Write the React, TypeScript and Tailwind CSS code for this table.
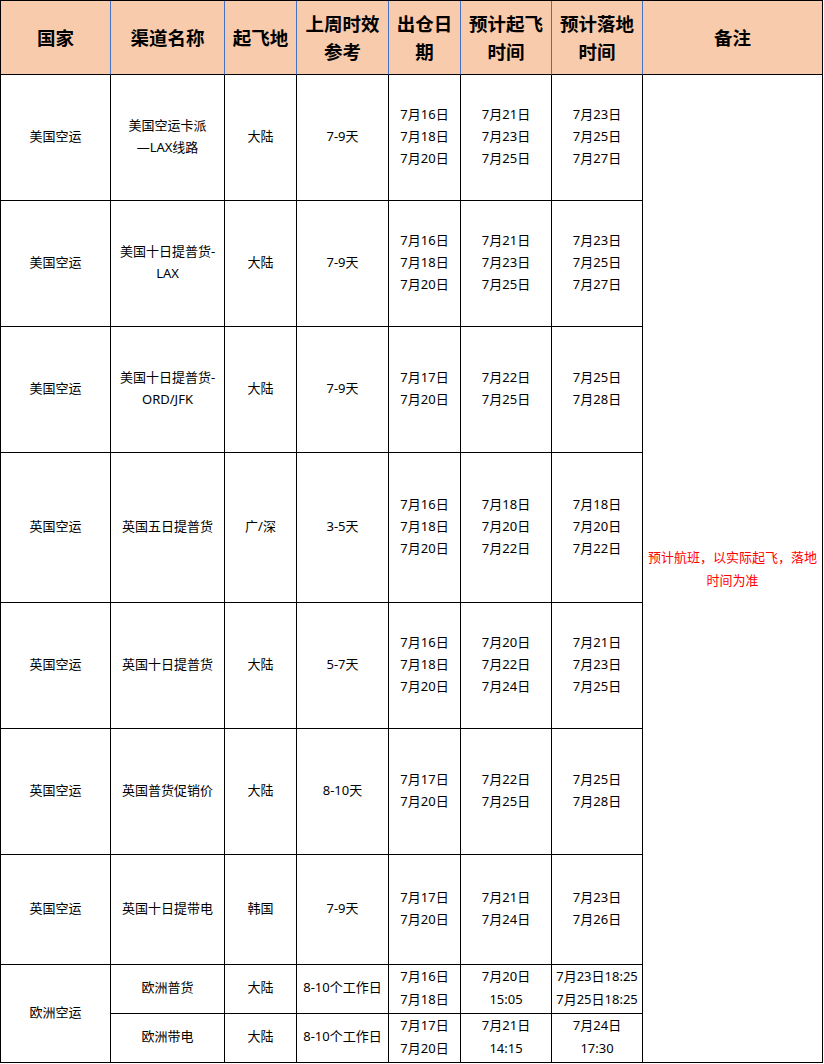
const rows = [
  { country: "美国空运", channel: ["美国空运卡派", "—LAX线路"], from: "大陆", days: "7-9天", out: ["7月16日", "7月18日", "7月20日"], fly: ["7月21日", "7月23日", "7月25日"], land: ["7月23日", "7月25日", "7月27日"] },
  { country: "美国空运", channel: ["美国十日提普货-", "LAX"], from: "大陆", days: "7-9天", out: ["7月16日", "7月18日", "7月20日"], fly: ["7月21日", "7月23日", "7月25日"], land: ["7月23日", "7月25日", "7月27日"] },
  { country: "美国空运", channel: ["美国十日提普货-", "ORD/JFK"], from: "大陆", days: "7-9天", out: ["7月17日", "7月20日"], fly: ["7月22日", "7月25日"], land: ["7月25日", "7月28日"] },
  { country: "英国空运", channel: ["英国五日提普货"], from: "广/深", days: "3-5天", out: ["7月16日", "7月18日", "7月20日"], fly: ["7月18日", "7月20日", "7月22日"], land: ["7月18日", "7月20日", "7月22日"] },
  { country: "英国空运", channel: ["英国十日提普货"], from: "大陆", days: "5-7天", out: ["7月16日", "7月18日", "7月20日"], fly: ["7月20日", "7月22日", "7月24日"], land: ["7月21日", "7月23日", "7月25日"] },
  { country: "英国空运", channel: ["英国普货促销价"], from: "大陆", days: "8-10天", out: ["7月17日", "7月20日"], fly: ["7月22日", "7月25日"], land: ["7月25日", "7月28日"] },
  { country: "英国空运", channel: ["英国十日提带电"], from: "韩国", days: "7-9天", out: ["7月17日", "7月20日"], fly: ["7月21日", "7月24日"], land: ["7月23日", "7月26日"] },
];

const base = "border-r border-b border-black flex flex-col items-center justify-center text-center text-[13px]";
const cell = base + " leading-[22px] text-black pb-[3px]";
const tight = base + " leading-[23px] text-black pb-[3px]";
const head = "border-r border-b border-b-black border-r-[#4472c4] flex flex-col items-center justify-center text-center text-[18.5px] leading-[28px] font-bold text-black bg-[#f8cbad]";

function Lines({ items }: { items: string[] }) {
  return (
    <>
      {items.map((t, i) => (
        <span key={i} className="whitespace-nowrap">{t}</span>
      ))}
    </>
  );
}

export default function App() {
  return (
    <div className="w-[824px] h-[1064px] bg-white" style={{ fontFamily: '"Noto Sans", "Noto Sans CJK SC", sans-serif' }}>
      <div className="grid grid-cols-[110px_114px_72px_92px_72px_91px_91px_180px] grid-rows-[74px_126px_126px_126px_150px_126px_126px_110px_49px_49px] w-fit border-l border-t border-black">
        <div className={head}>国家</div>
        <div className={head}>渠道名称</div>
        <div className={head}>起飞地</div>
        <div className={head}><span>上周时效</span><span>参考</span></div>
        <div className={head}><span>出仓日</span><span>期</span></div>
        <div className={head}><span>预计起飞</span><span>时间</span></div>
        <div className={head}><span>预计落地</span><span>时间</span></div>
        <div className="border-r border-b border-black flex items-center justify-center text-[18.5px] font-bold text-black bg-[#f8cbad]">备注</div>

        {rows.map((r, i) => (
          <RowCells key={i} r={r} first={i === 0} />
        ))}

        <div className={cell + " row-span-2"}>欧洲空运</div>
        <div className={tight}>欧洲普货</div>
        <div className={tight}>大陆</div>
        <div className={tight}>8-10个工作日</div>
        <div className={tight}><Lines items={["7月16日", "7月18日"]} /></div>
        <div className={tight}><Lines items={["7月20日", "15:05"]} /></div>
        <div className={tight}><Lines items={["7月23日18:25", "7月25日18:25"]} /></div>

        <div className={tight}>欧洲带电</div>
        <div className={tight}>大陆</div>
        <div className={tight}>8-10个工作日</div>
        <div className={tight}><Lines items={["7月17日", "7月20日"]} /></div>
        <div className={tight}><Lines items={["7月21日", "14:15"]} /></div>
        <div className={tight}><Lines items={["7月24日", "17:30"]} /></div>
      </div>
    </div>
  );
}

function RowCells({ r, first }: { r: (typeof rows)[number]; first: boolean }) {
  return (
    <>
      <div className={cell}>{r.country}</div>
      <div className={cell}><Lines items={r.channel} /></div>
      <div className={cell}>{r.from}</div>
      <div className={cell}>{r.days}</div>
      <div className={cell}><Lines items={r.out} /></div>
      <div className={cell}><Lines items={r.fly} /></div>
      <div className={cell}><Lines items={r.land} /></div>
      {first && (
        <div className={base + " row-span-9 text-[#ff0000] leading-[23px]"}>
          <span>预计航班，以实际起飞，落地</span>
          <span>时间为准</span>
        </div>
      )}
    </>
  );
}
